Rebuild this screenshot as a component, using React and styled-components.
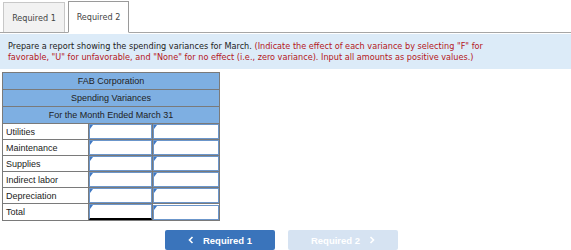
import React from "react";
import styled, { createGlobalStyle } from "styled-components";

const Global = createGlobalStyle`
  html, body { margin: 0; padding: 0; background: #fff; }
  body { font-family: "DejaVu Sans", Verdana, sans-serif; width: 571px; height: 250px; overflow: hidden; }
`;

const Page = styled.div`
  width: 571px;
  display: flex;
  flex-direction: column;
`;

const TabBar = styled.div`
  display: flex;
  align-items: flex-end;
  gap: 3px;
  padding: 2px 0 0 3px;
  height: 33px;
  box-sizing: border-box;
  border-bottom: 1px solid #a6a6a6;
`;

const Tab = styled.div`
  box-sizing: border-box;
  width: ${(p) => p.$w}px;
  height: ${(p) => (p.$active ? 32 : 30)}px;
  margin-bottom: ${(p) => (p.$active ? -1 : 0)}px;
  background: ${(p) => (p.$active ? "#fff" : "#f2f2f2")};
  border: 1px solid ${(p) => (p.$active ? "#9a9a9a" : "#c8c8c8")};
  border-bottom: ${(p) => (p.$active ? "1px solid #fff" : "none")};
  display: flex;
  align-items: center;
  justify-content: center;
  font-family: "DejaVu Sans Condensed", "DejaVu Sans", sans-serif;
  font-size: 9px;
  color: #444;
`;

const Instructions = styled.div`
  margin-top: 1px;
  background: #dcebf8;
  padding: 7px 84px 4px 8px;
  height: 35px;
  box-sizing: border-box;
  font-family: "DejaVu Sans Condensed", "DejaVu Sans", sans-serif;
  font-size: 9.05px;
  line-height: 11px;
  color: #222;
`;

const Red = styled.span`
  color: #b4161b;
`;

const Table = styled.table`
  margin: 3px 0 0 2px;
  border-collapse: collapse;
  font-family: "Liberation Sans", Arial, sans-serif;
  font-size: 9px;
  color: #222;
  width: 218px;
  border: 1px solid #7a7a7a;
`;

const HeadCell = styled.td`
  background: #7eafe2;
  text-align: center;
  height: 16px;
  padding: 0;
  border: 1px solid #7a7a7a;
`;

const LabelCell = styled.td`
  width: 82px;
  height: 15px;
  padding: 0 0 0 3px;
  border: 1px solid #7a7a7a;
  background: #fff;
`;

const InputCell = styled.td`
  padding: 0;
  border: 1px solid #7a7a7a;
  width: ${(p) => p.$w}px;
`;

const InputBox = styled.div`
  position: relative;
  height: 13px;
  border: 1px solid #6b96cb;
  border-bottom: ${(p) => (p.$total ? "2px solid #000" : "1px solid #6b96cb")};
  background: #fff;
  &::before {
    content: "";
    position: absolute;
    left: 0;
    top: 0;
    border-top: 4px solid #3f78c4;
    border-right: 3px solid transparent;
  }
`;

const Buttons = styled.div`
  display: flex;
  gap: 13px;
  padding-left: 165px;
  margin-top: 9px;
`;

const NavButton = styled.div`
  width: 110px;
  height: 20px;
  box-sizing: border-box;
  border-radius: 2px;
  background: ${(p) => (p.$disabled ? "#d6e3f2" : "#3a74bb")};
  color: #fff;
  font-family: "Liberation Sans", Arial, sans-serif;
  font-weight: bold;
  font-size: 9.5px;
  display: flex;
  align-items: center;
  justify-content: center;
  gap: 9px;
`;

const Chevron = ({ dir }) => (
  <svg width="6" height="8" viewBox="0 0 6 8">
    <path
      d={dir === "left" ? "M4.5 1 L1.5 4 L4.5 7" : "M1.5 1 L4.5 4 L1.5 7"}
      fill="none"
      stroke="#fff"
      strokeWidth="1.6"
    />
  </svg>
);

const rows = ["Utilities", "Maintenance", "Supplies", "Indirect labor", "Depreciation", "Total"];

export default function App() {
  return (
    <Page>
      <Global />
      <TabBar>
        <Tab $w={62}>Required 1</Tab>
        <Tab $w={61} $active>Required 2</Tab>
      </TabBar>
      <Instructions>
        Prepare a report showing the spending variances for March.{" "}
        <Red>
          (Indicate the effect of each variance by selecting "F" for favorable, "U" for unfavorable, and "None" for
          no effect (i.e., zero variance). Input all amounts as positive values.)
        </Red>
      </Instructions>
      <Table>
        <tbody>
          <tr><HeadCell colSpan={3}>FAB Corporation</HeadCell></tr>
          <tr><HeadCell colSpan={3}>Spending Variances</HeadCell></tr>
          <tr><HeadCell colSpan={3}>For the Month Ended March 31</HeadCell></tr>
          {rows.map((r) => (
            <tr key={r}>
              <LabelCell>{r}</LabelCell>
              <InputCell $w={64}><InputBox $total={r === "Total"} /></InputCell>
              <InputCell $w={66}><InputBox /></InputCell>
            </tr>
          ))}
        </tbody>
      </Table>
      <Buttons>
        <NavButton><Chevron dir="left" />Required 1</NavButton>
        <NavButton $disabled>Required 2<Chevron dir="right" /></NavButton>
      </Buttons>
    </Page>
  );
}
